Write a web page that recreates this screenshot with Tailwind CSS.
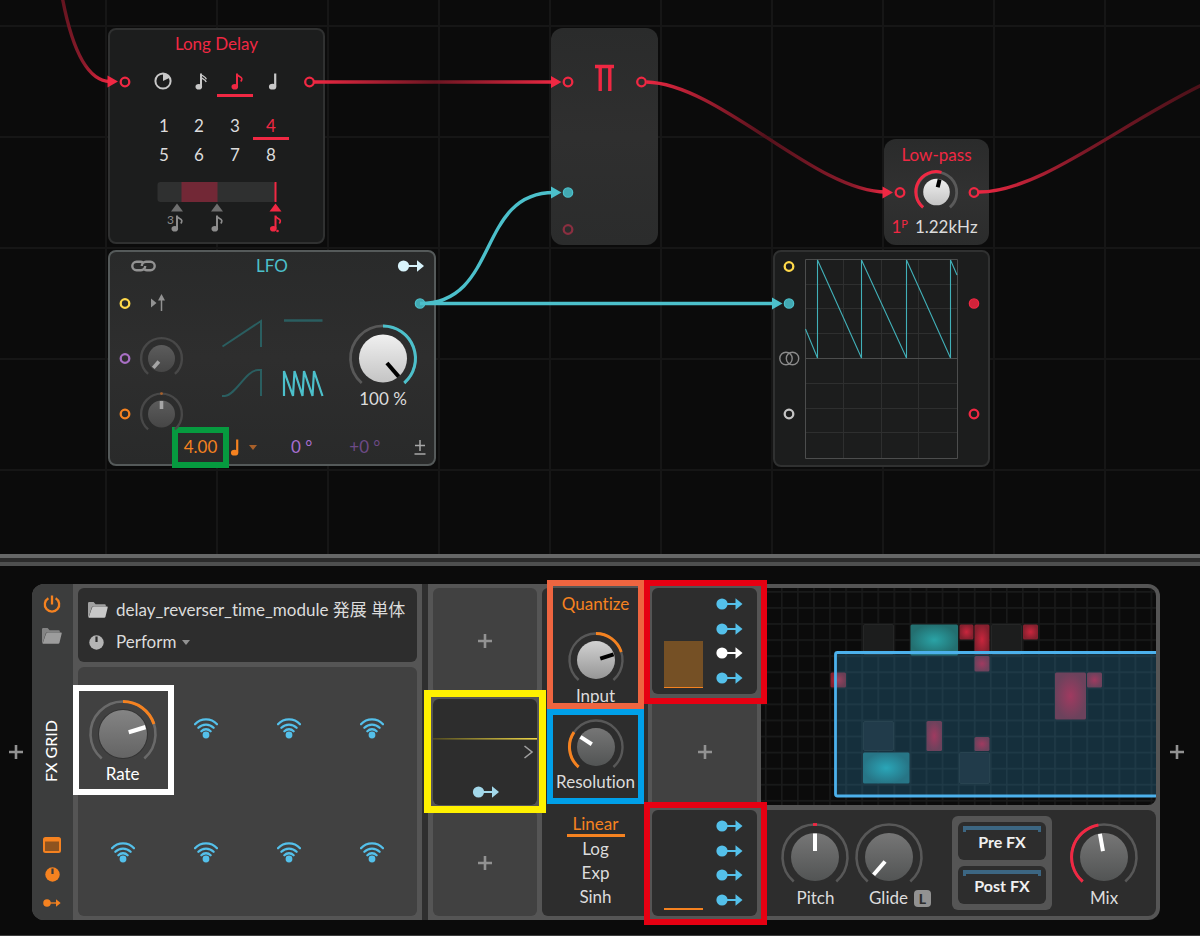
<!DOCTYPE html>
<html lang="ja">
<head>
<meta charset="utf-8">
<meta name="viewport" content="width=device-width, initial-scale=1">
<title>FX Grid</title>
<script src="https://cdn.jsdelivr.net/npm/@tailwindcss/browser@4"></script>
</head>
<body class="bg-[#0b0b0b] font-[Lato,'Noto_Sans_CJK_JP',sans-serif] text-[17px] leading-5 text-[#dcdcdc] [font-variant-ligatures:none]">

<!-- shared symbols and gradients -->
<svg class="absolute h-0 w-0" aria-hidden="true">
  <defs>
    <linearGradient id="kWhite" x1="0" y1="0" x2="0" y2="1"><stop offset="0" stop-color="#f0f0f0"/><stop offset="1" stop-color="#c4c4c4"/></linearGradient>
    <linearGradient id="kLight" x1="0" y1="0" x2="0" y2="1"><stop offset="0" stop-color="#d2d2d2"/><stop offset="1" stop-color="#969696"/></linearGradient>
    <linearGradient id="kMid" x1="0" y1="0" x2="0" y2="1"><stop offset="0" stop-color="#848484"/><stop offset="1" stop-color="#646464"/></linearGradient>
    <linearGradient id="kGray" x1="0" y1="0" x2="0" y2="1"><stop offset="0" stop-color="#767676"/><stop offset="1" stop-color="#525454"/></linearGradient>
    <linearGradient id="kDim" x1="0" y1="0" x2="0" y2="1"><stop offset="0" stop-color="#5c5c5c"/><stop offset="1" stop-color="#464646"/></linearGradient>
    <radialGradient id="bTeal"><stop offset="0" stop-color="#2aa3a6"/><stop offset="1" stop-color="#236f70"/></radialGradient>
    <radialGradient id="bRed"><stop offset="0" stop-color="#c9263d"/><stop offset="1" stop-color="#84202e"/></radialGradient>
    <radialGradient id="bTealIn"><stop offset="0" stop-color="#2aa6b8"/><stop offset="1" stop-color="#277586"/></radialGradient>
    <radialGradient id="bPink"><stop offset="0" stop-color="#a03a60"/><stop offset="1" stop-color="#6c425c"/></radialGradient>
    <symbol id="mod" viewBox="0 0 27 12" overflow="visible"><circle cx="6" cy="6" r="5.6" fill="currentColor"/><path d="M10 6H20" stroke="currentColor" stroke-width="2"/><path d="M19.5 0.3L26.5 6L19.5 11.7Z" fill="currentColor"/></symbol>
    <symbol id="port" viewBox="-6 -6 12 12" overflow="visible"><circle r="4.3" fill="none" stroke="currentColor" stroke-width="2.3"/></symbol>
    <symbol id="portOn" viewBox="-6 -6 12 12" overflow="visible"><circle r="4.6" fill="currentColor" stroke="currentColor" stroke-width="1.4"/><circle r="4" fill="#000" fill-opacity=".12"/></symbol>
    <symbol id="n4" viewBox="0 0 12 17" overflow="visible"><path d="M8.2 .5V13.5" stroke="currentColor" stroke-width="2.2"/><ellipse cx="5.6" cy="13.7" rx="3.7" ry="2.9" fill="currentColor"/></symbol>
    <symbol id="n8" viewBox="0 0 12 17" overflow="visible"><path d="M6 .5V13.5" stroke="currentColor" stroke-width="2"/><ellipse cx="3.8" cy="13.7" rx="3.3" ry="2.8" fill="currentColor"/><path d="M6 1.4C6.8 3.6 10.4 3.6 10.8 5.6C11 6.8 10.4 7.6 9.8 8.4" stroke="currentColor" stroke-width="1.7" fill="none"/></symbol>
    <symbol id="n16" viewBox="0 0 12 17" overflow="visible"><path d="M6 .5V13.5" stroke="currentColor" stroke-width="2"/><ellipse cx="3.8" cy="13.7" rx="3.3" ry="2.8" fill="currentColor"/><path d="M6 1.2C7 3 10.6 3.4 11.4 6.2M6 4.4C7 6 10.4 6.2 11.2 9" stroke="currentColor" stroke-width="1.3" fill="none"/></symbol>
    <symbol id="folder" viewBox="0 0 20 16"><path d="M0 1.2Q0 0 1.2 0H5.6L7.6 2.2H16.6Q17.8 2.2 17.8 3.2V4.6H5.2Q4 4.6 3.6 5.8L.6 15.4Q0 15 0 14Z" fill="currentColor" opacity=".75"/><path d="M6 4.6H19Q20 4.6 19.7 5.6L17.4 15Q17.2 15.8 16.2 15.8H.6L4 5.8Q4.6 4.6 6 4.6Z" fill="currentColor"/></symbol>
    <symbol id="wifi" viewBox="-12 -17 24 21"><circle r="3.4" fill="currentColor"/><path d="M-11-10.8A15 15 0 0 1 11-10.8M-7.6-7.2A10.6 10.6 0 0 1 7.6-7.2M-4.6-3.8A6.4 6.4 0 0 1 4.6-3.8" fill="none" stroke="currentColor" stroke-width="2.3" stroke-linecap="round"/></symbol>
    <symbol id="plus" viewBox="0 0 14 14"><path d="M7 0V14M0 7H14" stroke="currentColor" stroke-width="2.6"/></symbol>
    <pattern id="mini" x="781" y="591" width="16.07" height="16.07" patternUnits="userSpaceOnUse"><path d="M.8 0V16.1M0 .8H16.1" stroke="#191a1a" stroke-width="1.6"/></pattern>
    <pattern id="canvasGrid" x="105" y="25" width="111" height="111" patternUnits="userSpaceOnUse"><path d="M1 0V111M0 1H111" stroke="#161616" stroke-width="2"/></pattern>
    <linearGradient id="w1" gradientUnits="userSpaceOnUse" x1="64" y1="0" x2="112" y2="81"><stop offset="0" stop-color="#64141f"/><stop offset=".7" stop-color="#8c1b2b"/><stop offset="1" stop-color="#e62640"/></linearGradient>
    <linearGradient id="w2" gradientUnits="userSpaceOnUse" x1="310" y1="0" x2="560" y2="0"><stop offset="0" stop-color="#f02843"/><stop offset=".5" stop-color="#6b1622"/><stop offset="1" stop-color="#f02843"/></linearGradient>
    <linearGradient id="w3" gradientUnits="userSpaceOnUse" x1="641" y1="0" x2="890" y2="0"><stop offset="0" stop-color="#f02843"/><stop offset=".5" stop-color="#55121c"/><stop offset=".85" stop-color="#8c1b2b"/><stop offset="1" stop-color="#f02843"/></linearGradient>
    <linearGradient id="w4" gradientUnits="userSpaceOnUse" x1="973" y1="0" x2="1200" y2="0"><stop offset="0" stop-color="#f02843"/><stop offset=".5" stop-color="#7a1826"/><stop offset="1" stop-color="#4c1119"/></linearGradient>
    <linearGradient id="yl"><stop offset="0" stop-color="#504a20"/><stop offset="1" stop-color="#f0d848"/></linearGradient>
  </defs>
</svg>

<main class="flex min-h-screen flex-col border-b border-[#3c3c3c]">

  <!-- patch canvas -->
  <section class="relative min-h-[554px] flex-1 overflow-hidden" aria-label="Patch canvas">
    <svg class="absolute inset-0 h-full w-full" aria-hidden="true">
      <rect width="100%" height="100%" fill="url(#canvasGrid)"/>
    </svg>

    <article class="absolute left-[108px] top-[28px] h-[216px] w-[217px] rounded-lg border-2 border-[#303131] bg-[#1c1d1d] pt-[4px]">
      <h2 class="text-center text-[#f02843]">Long Delay</h2>
      <div class="ml-[35px] mt-[12px] grid w-[144px] grid-cols-4 text-[#c8c8c8]">
        <button class="flex h-[31px] items-center justify-center border-b-3 border-transparent pt-[2px]" aria-label="Seconds"><svg class="h-[18px] w-[18px]" viewBox="-9 -9 18 18"><circle r="7.6" fill="none" stroke="currentColor" stroke-width="2"/><path d="M0 0V-7.6A7.6 7.6 0 0 1 6.8-3.2Z" fill="currentColor"/></svg></button>
        <button class="flex h-[31px] items-center justify-center border-b-3 border-transparent pl-1 pt-[2px]" aria-label="Sixteenth"><svg class="h-[17px] w-[12px]"><use href="#n16"/></svg></button>
        <button class="flex h-[31px] items-center justify-center border-b-3 border-[#f02843] pl-1 pt-[2px] text-[#f02843]" aria-label="Eighth"><svg class="h-[17px] w-[12px]"><use href="#n8"/></svg></button>
        <button class="flex h-[31px] items-center justify-center border-b-3 border-transparent pl-1 pt-[2px]" aria-label="Quarter"><svg class="h-[17px] w-[12px]"><use href="#n4"/></svg></button>
      </div>
      <div class="ml-[35px] mt-[15px] grid w-[144px] grid-cols-4 gap-y-[3px] text-[#dcdcdc]">
        <button class="h-[28px] border-b-3 border-transparent pt-[2px] pl-[2px]">1</button><button class="border-b-3 border-transparent pt-[2px]">2</button><button class="border-b-3 border-transparent pt-[2px]">3</button><button class="border-b-3 border-[#f02843] pt-[2px] text-[#f02843]">4</button>
        <button class="h-[26px] border-b-3 border-transparent pl-[2px]">5</button><button class="border-b-3 border-transparent">6</button><button class="border-b-3 border-transparent">7</button><button class="border-b-3 border-transparent">8</button>
      </div>
      <svg class="absolute -inset-[2px] h-[216px] w-[217px] pointer-events-none" viewBox="108 28 217 216">
        <use href="#port" x="119" y="76" width="12" height="12" color="#f02843"/><use href="#port" x="303.500" y="76" width="12" height="12" color="#f02843"/>
        <rect x="157.500" y="182" width="118" height="20" rx="3" fill="#2f3030"/><rect x="181.500" y="182" width="36" height="20" fill="#722836"/><rect x="274.500" y="182" width="2" height="20" fill="#f02843"/>
        <path d="M177 203.500L183 211.500H171ZM217 203.500L223 211.500H211Z" fill="#6e6e6e"/><path d="M275.500 203.500L281.500 211.500H269.500Z" fill="#f02843"/>
        <use href="#n8" x="171" y="215" width="12" height="17" color="#8c8c8c"/><use href="#n8" x="211" y="215" width="12" height="17" color="#8c8c8c"/>
        <use href="#n8" x="269.500" y="215" width="12" height="17" color="#f02843"/><circle cx="277.500" cy="231" r="1.300" fill="#f02843"/>
        <text x="167" y="224" font-size="12" fill="#8c8c8c">3</text>
      </svg>
    </article>

    <article class="absolute left-[108px] top-[250px] flex h-[216px] w-[328px] flex-col rounded-lg border-2 border-[#555a5a] bg-linear-to-b from-[#292a2a] via-[#2e2e2e] to-[#292a2a] pt-[4px]">
      <h2 class="text-center text-[#4cc0cb]">LFO</h2>
      <p class="mt-[113px] ml-[227px] w-[92px] text-center">100 %</p>
      <div class="mt-[28px] flex items-center pl-[64px] pr-[8px]">
        <div class="relative">
          <input class="block w-[53px] bg-transparent text-center text-[#f58220] outline-none" value="4.00" aria-label="Rate">
          <div class="pointer-events-none absolute -inset-x-[2px] -top-[10px] -bottom-[11px] border-6 border-[#069a3f]"></div>
        </div>
        <button class="flex items-center gap-[8px] pl-[2px] text-[#f58220]" aria-label="Rate unit"><svg class="h-[17px] w-[12px]"><use href="#n4"/></svg><svg class="h-[5px] w-[8px]" viewBox="0 0 8 5"><path d="M0 0H8L4 5Z" fill="#a8602a"/></svg></button>
        <span class="ml-[34px] text-[#a86fd0]">0 °</span>
        <span class="ml-[37px] text-[#6d4a86]">+0 °</span>
        <button class="ml-auto text-[#a8a8a8]" aria-label="Bipolar"><svg class="h-[15px] w-[12px]" viewBox="0 0 12 15"><path d="M6 0V11M1 5.500H11M.5 14H11.500" stroke="currentColor" stroke-width="1.500"/></svg></button>
      </div>
      <svg class="pointer-events-none absolute -inset-[2px] h-[216px] w-[328px]" viewBox="108 250 328 216">
        <g fill="none" stroke="#929292" stroke-width="2.400"><path d="M143 262.500Q142 261.800 140.500 261.800H136.500A4.200 4.200 0 0 0 136.500 270.200H141A4.200 4.200 0 0 0 145.200 266"/><path d="M144.500 269.500Q145.500 270.200 147 270.200H150.500A4.200 4.200 0 0 0 150.500 261.800H146A4.200 4.200 0 0 0 141.800 266"/></g>
        <use href="#mod" x="397.500" y="260" width="27" height="12" color="#d8f3fb"/>
        <use href="#port" x="119" y="297.500" width="12" height="12" color="#ffd94a"/>
        <path d="M151 298.500L156.500 303L151 307.500ZM158 300.500L161.500 294L165 300.500Z" fill="#929292"/><path d="M161.500 299V311" stroke="#929292" stroke-width="1.500"/>
        <use href="#portOn" x="414" y="297.500" width="12" height="12" color="#4cc0cb"/>
        <use href="#port" x="119" y="352.500" width="12" height="12" color="#a86fc4"/>
        <g role="slider" aria-label="Phase modulation" aria-valuenow="0" transform="translate(161.5 358.500)"><path d="M-13.400 15.400A20.400 20.400 0 1 1 13.400 15.400" fill="none" stroke="#484848" stroke-width="2.400"/><circle r="13.500" fill="url(#kDim)"/><path d="M0-4V-12.500" stroke="#a6a6a6" stroke-width="3.600" transform="rotate(-139)"/></g>
        <use href="#port" x="119" y="408" width="12" height="12" color="#f58220"/>
        <g role="slider" aria-label="Rate modulation" aria-valuenow="0" transform="translate(161.5 414)"><path d="M-13.400 15.400A20.400 20.400 0 1 1 13.400 15.400" fill="none" stroke="#484848" stroke-width="2.400"/><circle r="13.500" fill="url(#kDim)"/><path d="M0-5V-13" stroke="#a6a6a6" stroke-width="3.600"/><circle cy="-20.400" r="1.400" fill="#a8602a"/></g>
        <g fill="none" stroke="#2a5e60" stroke-width="2"><path d="M222.500 346.500L261 321V347"/><path d="M284 320.500H322.500" stroke-width="2.600"/><path d="M222 396H225C236 395 246 370 258 370H261V396"/></g>
        <path d="M284 396V371L293 396L294.500 371L302.500 396L304 371L312.500 396L314 371L322.500 396" fill="none" stroke="#4cc0cb" stroke-width="2.200" stroke-linejoin="bevel"/>
        <g role="slider" aria-label="Amount" aria-valuenow="100" transform="translate(383 358.500)"><path d="M-21.300 24.500A32.500 32.500 0 1 1 21.300 24.500" fill="none" stroke="#585858" stroke-width="2.800"/><path d="M0-32.500A32.500 32.500 0 0 1 21.300 24.500" fill="none" stroke="#4cc0cb" stroke-width="3"/><circle r="24" fill="url(#kWhite)"/><path d="M0-6V-24" stroke="#000" stroke-width="4" transform="rotate(139)"/></g>
      </svg>
    </article>

    <article class="absolute left-[551px] top-[28px] h-[217px] w-[107px] rounded-xl bg-linear-to-b from-[#2a2b2b] via-[#2f2f2f] to-[#2b2c2c]" aria-label="Multiply">
      <svg class="h-[217px] w-[107px]" viewBox="551 28 107 217">
        <path d="M595 66.500H614M600.200 66V91M609.800 66V91" stroke="#f02843" stroke-width="3.400" fill="none"/>
        <use href="#port" x="562" y="76" width="12" height="12" color="#f02843"/><use href="#port" x="635.500" y="76" width="12" height="12" color="#f02843"/>
        <use href="#portOn" x="562" y="186.500" width="12" height="12" color="#4cc0cb"/><use href="#port" x="562" y="223.500" width="12" height="12" color="#8a2f40"/>
      </svg>
    </article>

    <article class="absolute left-[884px] top-[139px] flex h-[106px] w-[105px] flex-col items-center justify-between rounded-xl bg-linear-to-b from-[#2a2b2b] via-[#313131] to-[#2b2c2c] pt-[6px] pb-[8px]">
      <h2 class="text-[#f02843]">Low-pass</h2>
      <p class="flex items-start gap-[7px] pr-[4px]"><span class="text-[#f02843]">1<sup class="text-[11px]">P</sup></span><span>1.22kHz</span></p>
      <svg class="pointer-events-none absolute inset-0 h-[106px] w-[105px]" viewBox="884 139 105 106">
        <use href="#port" x="894" y="186.500" width="12" height="12" color="#f02843"/><use href="#port" x="968" y="186.500" width="12" height="12" color="#f02843"/>
        <g role="slider" aria-label="Cutoff" aria-valuenow="1220" transform="translate(936.5 192)"><path d="M-13.400 15.400A20.200 20.200 0 1 1 13.400 15.400" fill="none" stroke="#5a5a5a" stroke-width="2.800"/><path d="M-13.400 15.400A20.200 20.200 0 0 1 5-19.600" fill="none" stroke="#f02843" stroke-width="3"/><circle r="13.300" fill="url(#kWhite)"/><path d="M0-5V-13" stroke="#000" stroke-width="4" transform="rotate(14)"/></g>
      </svg>
    </article>

    <article class="absolute left-[773px] top-[250px] h-[217px] w-[217px] rounded-lg border-2 border-[#303131] bg-[#1c1d1d]" aria-label="Oscilloscope">
      <svg class="absolute -inset-[2px] h-[217px] w-[217px]" viewBox="773 250 217 217">
        <path d="M843.500 260V458M881.500 260V458M918.500 260V458M806 284.500H957M806 308.500H957M806 333.500H957M806 383.500H957M806 408.500H957M806 432.500H957" stroke="#2e2f2f"/>
        <path d="M805.500 259.500H957.500V458.500H805.500ZM806 358.500H957" fill="none" stroke="#4c4d4d"/>
        <path d="M805.500 329L817.500 358V260L861.500 358V260L906.500 358V260L950.500 358V260L957 275" fill="none" stroke="#41b0b8" stroke-width="1.100" stroke-linejoin="bevel"/>
        <use href="#port" x="783" y="260.500" width="12" height="12" color="#ffd94a"/><use href="#portOn" x="783" y="297.500" width="12" height="12" color="#4cc0cb"/>
        <g fill="none" stroke="#8a8a8a" stroke-width="1.400"><circle cx="786" cy="358.500" r="6.200"/><circle cx="792.500" cy="358.500" r="6.200"/></g>
        <use href="#port" x="783" y="408" width="12" height="12" color="#c4c4c4"/><use href="#portOn" x="968" y="297.500" width="12" height="12" color="#f02843"/><use href="#port" x="968" y="408" width="12" height="12" color="#f02843"/>
      </svg>
    </article>

    <!-- cables -->
    <svg class="pointer-events-none absolute inset-0 h-full w-full" aria-hidden="true">
      <g fill="none" stroke-width="3.400">
        <path d="M62 -4C72 50 88 81 110 81.500" stroke="url(#w1)"/>
        <path d="M314 80.300H552V83.700H314Z" fill="url(#w2)" stroke="none"/>
        <path d="M646.500 82C720 84 815 192 886 192" stroke="url(#w3)"/>
        <path d="M979 192C1040 192 1120 124 1204 84" stroke="url(#w4)"/>
        <path d="M420 303.500C500 303.500 476 192.500 554 192.500M420 303.500H774" stroke="#4cc0cb"/>
      </g>
      <path d="M107.500 75.500L118 81.500L107.500 87.500ZM551 76L561.500 82L551 88ZM882.500 186.500L893 192.500L882.500 198.500Z" fill="#f02843"/>
      <path d="M551 186.500L561.500 192.500L551 198.500ZM772 297.500L782.500 303.500L772 309.500Z" fill="#4cc0cb"/>
    </svg>
  </section>

  <div class="h-[12px] border-y-4 border-t-[#666767] border-b-[#4e4f4f] bg-[#2b2b2b]"></div>

  <!-- device chain -->
  <section class="flex pt-[18px] pb-[15px]" aria-label="Device chain">
    <button class="flex w-[32px] items-center justify-center text-[#929292]" aria-label="Add device before"><svg class="h-[14px] w-[14px]"><use href="#plus"/></svg></button>

    <div class="flex h-[336px] flex-1 rounded-xl bg-[#555]">
      <aside class="flex w-[41px] shrink-0 flex-col items-center rounded-l-xl bg-[#3c3d3d] pt-[11px] pr-[1px] pb-[13px]">
        <button class="text-[#f58220]" aria-label="Power"><svg class="h-[18px] w-[18px]" viewBox="0 0 18 18"><path d="M5.400 3.200A7.200 7.200 0 1 0 12.600 3.200M9 .5V9.500" fill="none" stroke="currentColor" stroke-width="2.300"/></svg></button>
        <button class="mt-[15px] text-[#9c9c9c]" aria-label="Browse"><svg class="h-[16px] w-[20px]"><use href="#folder"/></svg></button>
        <div class="flex flex-1 items-center pt-[22px] pr-[2px]"><h1 class="rotate-180 text-[16px] font-medium text-white [writing-mode:vertical-rl]">FX GRID</h1></div>
        <button class="text-[#f58220]" aria-label="Open window"><svg class="h-[16px] w-[18px]" viewBox="0 0 18 16"><rect x="1" y="1" width="16" height="14" rx="1.500" fill="#8e531f" stroke="currentColor" stroke-width="2"/><path d="M1 1H17V4.500H1Z" fill="currentColor"/></svg></button>
        <button class="mt-[14px] text-[#f58220]" aria-label="Remote controls"><svg class="h-[15px] w-[15px]" viewBox="0 0 15 15"><circle cx="7.500" cy="7.500" r="7.200" fill="currentColor"/><path d="M7.500 1.500V7" stroke="#3c3d3d" stroke-width="2.200"/></svg></button>
        <button class="mt-[17px] text-[#f58220]" aria-label="Modulators"><svg class="h-[8px] w-[18px]"><use href="#mod"/></svg></button>
      </aside>

      <div class="flex w-[349px] shrink-0 flex-col gap-[5px] px-[5px] py-[4px]">
        <header class="flex h-[74px] flex-col justify-center gap-[12px] rounded-md bg-[#2d2d2d] pt-[2px] pl-[10px]">
          <div class="flex items-center gap-[8px]"><svg class="h-[16px] w-[20px] text-[#c8c8c8]"><use href="#folder"/></svg><span class="whitespace-nowrap">delay_reverser_time_module 発展 単体</span></div>
          <div class="flex items-center pl-[1px]">
            <svg class="h-[15px] w-[15px] text-[#b4b4b4]" viewBox="0 0 15 15"><circle cx="7.500" cy="7.500" r="7.200" fill="currentColor"/><path d="M7.500 1.500V7" stroke="#2d2d2d" stroke-width="2.200"/></svg>
            <select class="ml-[12px] appearance-none bg-transparent text-[17px] outline-none" aria-label="Page"><option>Perform</option></select>
            <svg class="ml-[5px] h-[5px] w-[8px]" viewBox="0 0 8 5"><path d="M0 0H8L4 5Z" fill="#929292"/></svg>
          </div>
        </header>
        <div class="grid flex-1 grid-cols-4 grid-rows-2 rounded-md bg-[#414141] px-[3px] pb-[1px] text-[#54c0ea]">
          <div class="relative flex flex-col items-center pt-[31px]">
            <button class="flex flex-col items-center text-white" aria-label="Rate">
              <svg class="h-[62px] w-[72px]" viewBox="-36 -36 72 62"><path d="M-21.300 24.500A32.500 32.500 0 1 1 21.300 24.500" fill="none" stroke="#6a6a6a" stroke-width="2.600"/><path d="M0-32.500A32.500 32.500 0 0 1 30.900-10" fill="none" stroke="#f58220" stroke-width="3"/><circle r="25" fill="#333"/><circle r="24" fill="url(#kMid)"/><path d="M0-6V-23.500" stroke="#fff" stroke-width="4.200" transform="rotate(73)"/></svg>
              <span class="mt-[4px]">Rate</span>
            </button>
            <div class="pointer-events-none absolute -left-[8px] -right-[10px] top-[18px] -bottom-[4px] border-6 border-white"></div>
          </div>
          <button class="flex items-center justify-center pb-[1px]" aria-label="Map control 2"><svg class="h-[21px] w-[24px]"><use href="#wifi"/></svg></button>
          <button class="flex items-center justify-center pb-[1px]" aria-label="Map control 3"><svg class="h-[21px] w-[24px]"><use href="#wifi"/></svg></button>
          <button class="flex items-center justify-center pb-[1px]" aria-label="Map control 4"><svg class="h-[21px] w-[24px]"><use href="#wifi"/></svg></button>
          <button class="flex items-center justify-center pb-[1px]" aria-label="Map control 5"><svg class="h-[21px] w-[24px]"><use href="#wifi"/></svg></button>
          <button class="flex items-center justify-center pb-[1px]" aria-label="Map control 6"><svg class="h-[21px] w-[24px]"><use href="#wifi"/></svg></button>
          <button class="flex items-center justify-center pb-[1px]" aria-label="Map control 7"><svg class="h-[21px] w-[24px]"><use href="#wifi"/></svg></button>
          <button class="flex items-center justify-center pb-[1px]" aria-label="Map control 8"><svg class="h-[21px] w-[24px]"><use href="#wifi"/></svg></button>
        </div>
      </div>

      <div class="w-[6px] shrink-0 bg-[#2f2f2f]"></div>

      <!-- modulator slots, first column -->
      <div class="grid w-[114px] shrink-0 grid-rows-3 gap-[5px] px-[5px] py-[4px] text-[#929292]">
        <button class="flex items-center justify-center rounded-md bg-[#414141]" aria-label="Add modulator"><svg class="h-[14px] w-[14px]"><use href="#plus"/></svg></button>
        <div class="relative rounded-md bg-[#2d2d2d]">
          <svg class="h-[106px] w-full" viewBox="433 699 104 106"><rect x="433" y="738" width="104" height="1.600" fill="url(#yl)"/><path d="M524.500 746L532 752L524.500 758" fill="none" stroke="#a0a0a0" stroke-width="1.600"/><use href="#mod" x="472.500" y="786" width="27" height="12" color="#a3d8ea"/></svg>
          <div class="pointer-events-none absolute -inset-x-[9px] -top-[9px] -bottom-[8px] z-10 border-7 border-[#fff100]"></div>
        </div>
        <button class="flex items-center justify-center rounded-md bg-[#414141]" aria-label="Add modulator"><svg class="h-[14px] w-[14px]"><use href="#plus"/></svg></button>
      </div>

      <!-- quantize modulator -->
      <div class="my-[4px] flex w-[106px] shrink-0 flex-col rounded-l-md bg-[#2d2d2d] pr-[5px]">
        <div class="relative flex h-[121px] flex-col items-center pl-[6px] pt-[6px]">
          <h2 class="text-[#f58220]">Quantize</h2>
          <button class="flex flex-col items-center" aria-label="Input">
            <svg class="mt-[16px] h-[52px] w-[60px]" viewBox="-30 -30 60 52"><path d="M-17.400 20A26.500 26.500 0 1 1 17.400 20" fill="none" stroke="#585858" stroke-width="2.400"/><path d="M0-26.500A26.500 26.500 0 0 1 25.300-8" fill="none" stroke="#f58220" stroke-width="2.800"/><circle r="19" fill="url(#kLight)"/><path d="M0-4.500V-18.500" stroke="#000" stroke-width="4" transform="rotate(72)"/></svg>
            <span class="mt-[4px]">Input</span>
          </button>
          <div class="pointer-events-none absolute left-[5px] -right-[1px] -top-[8px] bottom-0 z-10 border-6 border-[#ee6540]"></div>
        </div>
        <div class="relative flex h-[95px] flex-col items-center pl-[6px]">
          <button class="flex flex-col items-center" aria-label="Resolution">
            <svg class="mt-[8px] h-[52px] w-[60px]" viewBox="-30 -30 60 52"><path d="M-17.400 20A26.500 26.500 0 1 1 17.400 20" fill="none" stroke="#585858" stroke-width="2.400"/><path d="M-17.400 20A26.500 26.500 0 0 1-22-14.800" fill="none" stroke="#f58220" stroke-width="3"/><circle r="19" fill="url(#kGray)"/><path d="M0-5V-18.500" stroke="#fff" stroke-width="4" transform="rotate(-57)"/></svg>
            <span class="mt-[3px]">Resolution</span>
          </button>
          <div class="pointer-events-none absolute left-[5px] -right-[1px] top-0 bottom-0 z-10 border-6 border-[#00a0e9]"></div>
        </div>
        <div class="flex flex-col items-center gap-[4px] pl-[6px] pt-[10px]">
          <button class="w-[58px] border-b-3 border-[#f58220] text-[#f58220]">Linear</button>
          <button class="-mt-[2px]">Log</button>
          <button>Exp</button>
          <button>Sinh</button>
        </div>
      </div>

      <!-- modulator slots, second column -->
      <div class="grid w-[113px] shrink-0 grid-rows-3 gap-[5px] px-[4px] py-[4px] text-[#54c0ea]">
        <div class="relative flex justify-between rounded-md bg-[#2d2d2d] pl-[12px] pr-[14px] py-[10px]">
          <div class="mb-[-4px] h-[47px] w-[39px] self-end border-b border-[#f58220] bg-[#755025]"></div>
          <div class="flex flex-col justify-between">
            <button class="block" aria-label="Output 1"><svg class="h-[12px] w-[27px]"><use href="#mod"/></svg></button>
            <button class="block" aria-label="Output 2"><svg class="h-[12px] w-[27px]"><use href="#mod"/></svg></button>
            <button class="block text-white" aria-label="Output 3"><svg class="h-[12px] w-[27px]"><use href="#mod"/></svg></button>
            <button class="block" aria-label="Output 4"><svg class="h-[12px] w-[27px]"><use href="#mod"/></svg></button>
          </div>
          <div class="pointer-events-none absolute -left-[8px] -right-[10px] -top-[8px] -bottom-[10px] z-10 border-6 border-[#e60012]"></div>
        </div>
        <button class="flex items-center justify-center bg-[#414141] text-[#929292]" aria-label="Add modulator"><svg class="h-[14px] w-[14px]"><use href="#plus"/></svg></button>
        <div class="relative flex justify-between rounded-md bg-[#2d2d2d] pl-[12px] pr-[14px] py-[10px]">
          <div class="mb-[-4px] w-[39px] self-end border-b-2 border-[#f58220]"></div>
          <div class="flex flex-col justify-between">
            <button class="block" aria-label="Output 1"><svg class="h-[12px] w-[27px]"><use href="#mod"/></svg></button>
            <button class="block" aria-label="Output 2"><svg class="h-[12px] w-[27px]"><use href="#mod"/></svg></button>
            <button class="block" aria-label="Output 3"><svg class="h-[12px] w-[27px]"><use href="#mod"/></svg></button>
            <button class="block" aria-label="Output 4"><svg class="h-[12px] w-[27px]"><use href="#mod"/></svg></button>
          </div>
          <div class="pointer-events-none absolute -left-[8px] -right-[10px] -top-[8px] -bottom-[9px] z-10 border-6 border-[#e60012]"></div>
        </div>
      </div>

      <!-- patch overview and main controls -->
      <div class="flex min-w-0 flex-1 flex-col gap-[5px] py-[4px] pr-[4px]">
        <div class="relative min-h-0 flex-1 overflow-hidden rounded-r-lg bg-[#0b0b0b]">
          <svg class="absolute inset-0 h-full w-full" viewBox="761 588 395 217" preserveAspectRatio="xMinYMin slice" role="img" aria-label="Patch overview">
            <rect x="761" y="588" width="800" height="217" fill="url(#mini)"/>
            <g fill="#1c1d1d" stroke="#252626"><rect x="863.500" y="624.500" width="30" height="30" rx="1.500"/><rect x="991.500" y="624.500" width="30" height="30" rx="1.500"/></g>
            <rect x="910.500" y="624.500" width="47.500" height="31" rx="1.500" fill="url(#bTeal)"/>
            <g fill="url(#bRed)"><rect x="959.500" y="624.500" width="14" height="15" rx="1.500"/><rect x="974.500" y="624.500" width="15" height="30" rx="1.500"/><rect x="1023" y="624.500" width="15" height="15" rx="1.500"/><rect x="830.500" y="672.500" width="15.500" height="15" rx="1.500"/></g>
            <rect x="835.500" y="652.500" width="1000" height="143.500" rx="2" fill="#2f86b0" fill-opacity=".3"/>
            <g fill="#213b4a" stroke="#284350"><rect x="863.500" y="721.500" width="30" height="29" rx="1.500"/><rect x="959.500" y="752.500" width="30" height="31" rx="1.500"/></g>
            <rect x="863" y="752.500" width="46.500" height="31" rx="1.500" fill="url(#bTealIn)"/>
            <g fill="url(#bPink)"><rect x="974.500" y="656" width="15" height="15.500" rx="1.500"/><rect x="1055" y="672.500" width="31" height="47" rx="1.500"/><rect x="1087" y="672.500" width="15" height="15" rx="1.500"/><rect x="926.500" y="721" width="15.500" height="30" rx="1.500"/><rect x="974.500" y="737" width="15" height="14" rx="1.500"/></g>
            <rect x="835.500" y="652.500" width="1000" height="143.500" rx="2" fill="none" stroke="#4cb1ec" stroke-width="2.800"/>
          </svg>
        </div>
        <div class="flex h-[106px] rounded-r-lg bg-[#2d2d2d] pl-[17px] pr-[16px]">
          <button class="flex w-[73px] flex-col items-center pt-[11px]" aria-label="Pitch">
            <svg class="h-[62px] w-[72px]" viewBox="-36 -36 72 62"><path d="M-21.300 24.500A32.500 32.500 0 1 1 21.300 24.500" fill="none" stroke="#585858" stroke-width="2.600"/><path d="M-2-32.500H2" stroke="#f02843" stroke-width="2.800"/><circle r="24" fill="url(#kGray)"/><path d="M0-6V-23.500" stroke="#fff" stroke-width="4"/></svg>
            <span class="mt-[5px] pl-[2px]">Pitch</span>
          </button>
          <div class="flex w-[75px] flex-col items-center pt-[11px]">
            <button class="block" aria-label="Glide"><svg class="h-[62px] w-[72px]" viewBox="-36 -36 72 62"><path d="M-21.300 24.500A32.500 32.500 0 1 1 21.300 24.500" fill="none" stroke="#585858" stroke-width="2.600"/><circle r="24" fill="url(#kGray)"/><path d="M0-6V-23.500" stroke="#fff" stroke-width="4" transform="rotate(-139)"/></svg></button>
            <span class="relative mt-[5px]">Glide<button class="absolute left-full top-[2px] ml-[6px] h-[17px] w-[17px] rounded-sm bg-[#929292] text-[14px] leading-[17px] font-black text-[#2d2d2d]" aria-label="Legato">L</button></span>
          </div>
          <div class="ml-[26px] mt-[6px] flex h-[94px] w-[100px] flex-col gap-[6px] rounded-md bg-[#555] p-[6px] text-[16px] font-bold text-[#f0f0f0]">
            <button class="flex flex-1 flex-col items-center rounded-md bg-[#2d2d2d] px-[5px] pt-[4px]"><span class="h-[6px] w-full border-x-3 border-t-4 border-[#3c6682]"></span><span>Pre FX</span></button>
            <button class="flex flex-1 flex-col items-center rounded-md bg-[#2d2d2d] px-[5px] pt-[4px]"><span class="h-[6px] w-full border-x-3 border-t-4 border-[#3c6682]"></span><span>Post FX</span></button>
          </div>
          <button class="ml-auto flex w-[72px] flex-col items-center pt-[11px]" aria-label="Mix">
            <svg class="h-[62px] w-[72px]" viewBox="-36 -36 72 62"><path d="M-21.300 24.500A32.500 32.500 0 1 1 21.300 24.500" fill="none" stroke="#585858" stroke-width="2.600"/><path d="M-21.300 24.500A32.500 32.500 0 0 1-5.600-32" fill="none" stroke="#f02843" stroke-width="3"/><circle r="24" fill="url(#kGray)"/><path d="M0-6V-23.500" stroke="#fff" stroke-width="4" transform="rotate(-10)"/></svg>
            <span class="mt-[5px]">Mix</span>
          </button>
        </div>
      </div>
    </div>

    <button class="flex w-[40px] items-center justify-center pr-[7px] text-[#929292]" aria-label="Add device after"><svg class="h-[14px] w-[14px]"><use href="#plus"/></svg></button>
  </section>
</main>
</body>
</html>
